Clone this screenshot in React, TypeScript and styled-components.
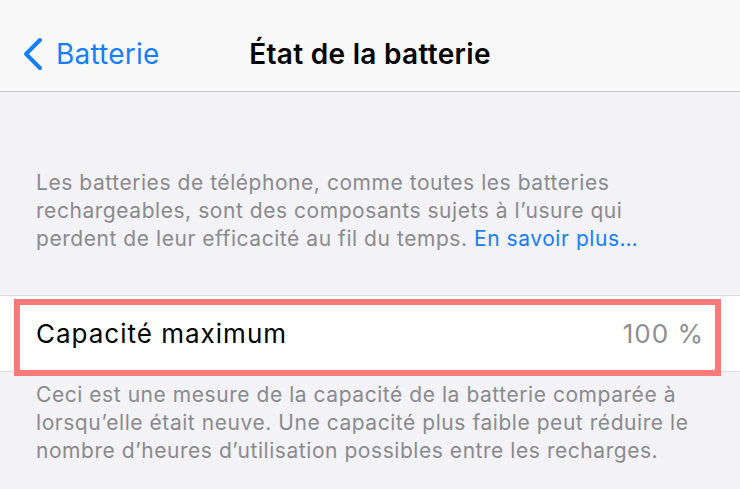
import styled, { createGlobalStyle } from "styled-components";

const GlobalStyle = createGlobalStyle`
  html, body {
    margin: 0;
    padding: 0;
    background: #f2f2f7;
  }
  body {
    font-family: Inter, "Noto Sans", sans-serif;
    -webkit-font-smoothing: antialiased;
  }
`;

const Page = styled.div`
  width: 740px;
  height: 489px;
  overflow: hidden;
  background: #f2f2f7;
`;

const NavBar = styled.header`
  height: 91px;
  display: grid;
  grid-template-columns: 1fr auto 1fr;
  align-items: center;
  background: #f9f9f9;
  border-bottom: 1px solid #c9c9cc;
`;

const BackButton = styled.button`
  justify-self: start;
  display: flex;
  align-items: center;
  gap: 12px;
  padding: 0 0 0 22px;
  margin-top: 16px;
  border: 0;
  background: none;
  color: #157efb;
  font-family: inherit;
  font-size: 28px;
  letter-spacing: 0.2px;
  cursor: pointer;
`;

const Title = styled.h1`
  margin: 16px 0 0;
  font-size: 28px;
  font-weight: 600;
  letter-spacing: 0.3px;
  color: #000;
`;

const Footnote = styled.p<{ $top: number }>`
  margin: ${({ $top }) => $top}px 0 0;
  padding: 0 36px;
  font-size: 21px;
  line-height: 28px;
  letter-spacing: 0.55px;
  color: #8a8a8e;
`;

const Link = styled.a`
  color: #157efb;
  text-decoration: none;
`;

const Group = styled.section`
  position: relative;
  margin-top: 42px;
  background: #fff;
  border-top: 1px solid #dcdce0;
  border-bottom: 1px solid #dcdce0;
`;

const Row = styled.div`
  height: 75px;
  display: flex;
  align-items: center;
  justify-content: space-between;
  padding: 0 36px;
  font-size: 26px;
  letter-spacing: 1px;
`;

const Label = styled.span`
  color: #000;
`;

const Value = styled.span`
  color: #8e8e93;
`;

const Highlight = styled.div`
  position: absolute;
  left: 14px;
  top: 3px;
  width: 707px;
  height: 77px;
  box-sizing: border-box;
  border: 6px solid #f87a7a;
  pointer-events: none;
`;

function Chevron() {
  return (
    <svg width="22" height="34" viewBox="0 0 22 34" fill="none">
      <path
        d="M18 3 L4 17 L18 31"
        stroke="#157efb"
        strokeWidth="4"
        strokeLinecap="round"
        strokeLinejoin="round"
      />
    </svg>
  );
}

export default function App() {
  return (
    <Page>
      <GlobalStyle />
      <NavBar>
        <BackButton>
          <Chevron />
          Batterie
        </BackButton>
        <Title>État de la batterie</Title>
        <span />
      </NavBar>
      <Footnote $top={77}>
        Les batteries de téléphone, comme toutes les batteries
        <br />
        rechargeables, sont des composants sujets à l’usure qui
        <br />
        perdent de leur efficacité au fil du temps.{" "}
        <Link href="#">En savoir plus…</Link>
      </Footnote>
      <Group>
        <Row>
          <Label>Capacité maximum</Label>
          <Value>100 %</Value>
        </Row>
        <Highlight />
      </Group>
      <Footnote $top={9}>
        Ceci est une mesure de la capacité de la batterie comparée à
        <br />
        lorsqu’elle était neuve. Une capacité plus faible peut réduire le
        <br />
        nombre d’heures d’utilisation possibles entre les recharges.
      </Footnote>
    </Page>
  );
}
